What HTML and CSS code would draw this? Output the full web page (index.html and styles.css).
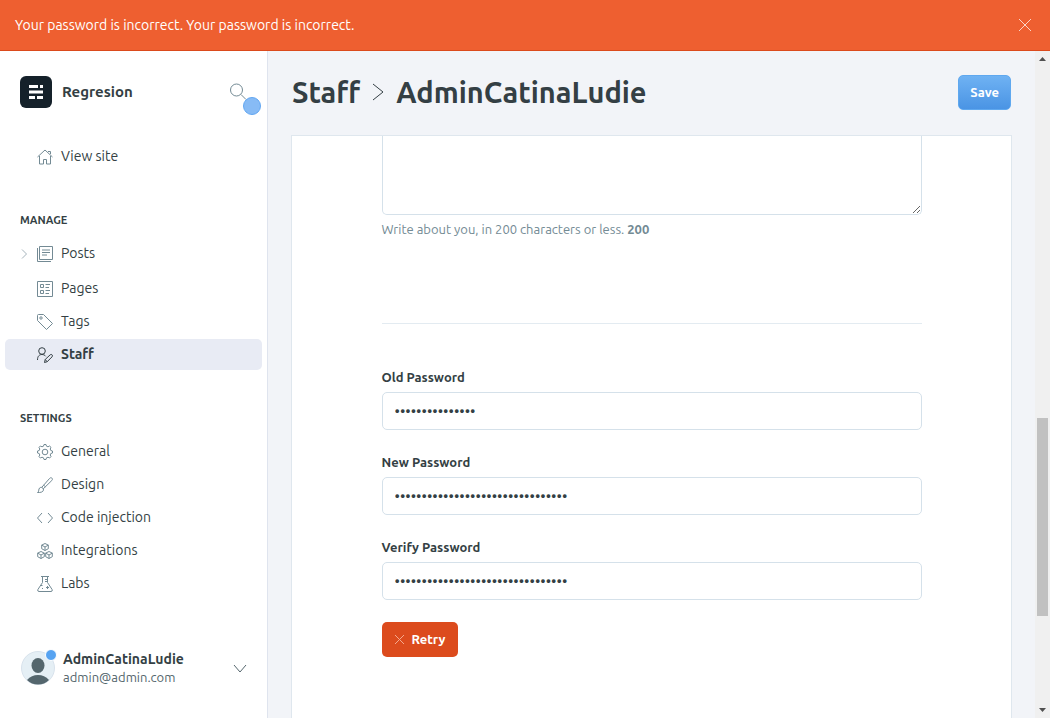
FILE: index.html
```html
<!DOCTYPE html>
<html lang="en">
<head>
<meta charset="utf-8">
<title>Staff - AdminCatinaLudie</title>
<link rel="stylesheet" href="styles.css">
</head>
<body>
<div class="alert" role="alert">
  <span>Your password is incorrect. Your password is incorrect.</span>
  <button class="icon-button" type="button" aria-label="Close"><svg width="14" height="14" viewBox="0 0 14 14"><path d="M1 1l12 12M13 1L1 13"/></svg></button>
</div>
<div class="app">
  <aside class="sidebar">
    <div class="brand">
      <svg class="logo" width="32" height="32" viewBox="0 0 32 32"><rect width="32" height="32" rx="6" fill="#15212a"/><path d="M9 9h9v3H9zM20 9h3v3h-3zM9 14.500h14v3H9zM9 20h6v3H9zM17 20h6v3h-6z" fill="#fff"/></svg>
      <strong class="brand-name">Regresion</strong>
      <button class="icon-button search" type="button" aria-label="Search"><svg width="18" height="18" viewBox="0 0 18 18"><circle cx="7.500" cy="7" r="6"/><path d="M12 11.500l5 5"/></svg><span class="beacon"></span></button>
    </div>
    <nav class="nav">
      <ul class="nav-list">
        <li><a class="nav-link" href="#"><svg width="16" height="16" viewBox="0 0 16 16"><path d="M.5 8L8 1l7.500 7M2.500 7v8h4v-4.500h3V15h4V7M11 2.500h2.500V5"/></svg>View site</a></li>
      </ul>
      <h2 class="nav-title">Manage</h2>
      <ul class="nav-list">
        <li class="nav-parent"><a class="nav-link" href="#"><svg class="expand" width="7" height="10" viewBox="0 0 7 10"><path d="M1 .5L5.500 5 1 9.500"/></svg><svg width="16" height="16" viewBox="0 0 16 16"><path d="M2.500.5h13v13h-13zM.5 2v13.500H14M5 4h8M5 6.500h8M5 9h5"/></svg>Posts</a></li>
        <li><a class="nav-link" href="#"><svg width="16" height="16" viewBox="0 0 16 16"><path d="M.5.5h15v15H.5zM3.500 3.500h3v3h-3zM3.500 9.500h3v3h-3zM8.500 3.500h4.500M8.500 6.500H12M8.500 9.500H13M8.500 12.500H12"/></svg>Pages</a></li>
        <li><a class="nav-link" href="#"><svg width="16" height="16" viewBox="0 0 16 16"><path d="M.5 1.500v5l9 9 6-6-9-9h-5q-1 0-1 1z"/><circle cx="4" cy="4" r="1.200"/></svg>Tags</a></li>
        <li><a class="nav-link active" href="#" aria-current="page"><svg width="16" height="16" viewBox="0 0 16 16"><circle cx="5" cy="4" r="3.300"/><path d="M.5 13c0-4 2-5.500 4.500-5.500 1.600 0 3 .7 3.700 1.800M7.500 15.500l.7-3 5-4.700q1-.8 1.900.1t0 1.900l-4.900 4.900zM8.200 12.500l2 2.200"/></svg>Staff</a></li>
      </ul>
      <h2 class="nav-title">Settings</h2>
      <ul class="nav-list">
        <li><a class="nav-link" href="#"><svg width="16" height="16" viewBox="0 0 16 16"><path d="M6.500 2.200L7 .5h2l.5 1.700 1.500.6L12.600 2 14 3.400 13.200 5l.6 1.500 1.700.5v2l-1.700.5-.6 1.500.8 1.600-1.400 1.400-1.600-.8-1.500.6L9 15.500H7l-.5-1.700-1.500-.6-1.600.8L2 12.600 2.800 11l-.6-1.500L.5 9V7l1.700-.5L2.800 5 2 3.400 3.400 2l1.600.8z"/><circle cx="8" cy="8" r="2.800"/></svg>General</a></li>
        <li><a class="nav-link" href="#"><svg width="16" height="16" viewBox="0 0 16 16"><path d="M.5 15.500c1.500-.8 1-2 1.500-3.500.6-1.800 2.600-2.200 3.800-1s.8 3.200-1 4c-1.300.6-2.800.5-4.300.5zM4.800 10.300l7.700-8.800c.8-.9 1.700-1 2.400-.4s.7 1.600-.1 2.400L6.300 11.800M6.700 8.200l1.700 1.600"/></svg>Design</a></li>
        <li><a class="nav-link" href="#"><svg width="16" height="16" viewBox="0 0 16 16"><path d="M5 3L.5 8 5 13M11 3l4.500 5-4.500 5"/></svg>Code injection</a></li>
        <li><a class="nav-link" href="#"><svg width="16" height="16" viewBox="0 0 16 16"><path d="M8 .5l3.300 1.600v3.600L8 7.500 4.700 5.700V2.100zM4.700 2.100L8 4l3.300-1.900M8 4v3.500M4 8.500l3.300 1.600v3.600L4 15.500.7 13.700v-3.600zM.7 10.100L4 12l3.300-1.900M4 12v3.500M12 8.500l3.300 1.600v3.600L12 15.500l-3.300-1.800v-3.600zM8.700 10.100L12 12l3.300-1.900M12 12v3.500"/></svg>Integrations</a></li>
        <li><a class="nav-link" href="#"><svg width="16" height="16" viewBox="0 0 16 16"><path d="M4 .5h8M5.500.5v6L.9 13.500q-.7 2 1.100 2h12q1.800 0 1.100-2L10.500 6.500v-6M8 3.500h2.500M8 5.500h2.500M3.500 9.500h2M9 11.500h3M10.500 10v3M5 12.500h1"/></svg>Labs</a></li>
      </ul>
    </nav>
    <button class="account" type="button">
      <span class="avatar"><svg width="34" height="34" viewBox="0 0 34 34"><circle cx="17" cy="17" r="16.500" fill="#e5eff5" stroke="#d8e2ec"/><ellipse cx="17" cy="14.500" rx="6.500" ry="7.500" fill="#54666d" stroke="none"/><path d="M6 29q4.500-5 11-5t11 5q-4.500 4.500-11 4.500T6 29z" fill="#54666d" stroke="none"/></svg><span class="avatar-dot"></span></span>
      <span class="account-text"><strong class="account-name">AdminCatinaLudie</strong><span class="account-mail">admin@admin.com</span></span>
      <svg width="14" height="9" viewBox="0 0 14 9"><path d="M1 1l6 7 6-7"/></svg>
    </button>
  </aside>
  <main class="main">
    <header class="page-head">
      <h1 class="title"><a href="#">Staff</a><svg width="12" height="18" viewBox="0 0 12 18"><path d="M1 1l10 8-10 8"/></svg><span>AdminCatinaLudie</span></h1>
      <button class="button save" type="submit" form="account-form">Save</button>
    </header>
    <section class="card">
      <form class="form" id="account-form">
        <textarea class="bio" id="bio" aria-label="Bio" aria-describedby="bio-hint"></textarea>
        <p class="hint" id="bio-hint">Write about you, in 200 characters or less. <b>200</b></p>
        <hr class="rule">
        <div class="field"><label for="old">Old Password</label><input id="old" type="password" value="incorrectpasswd"></div>
        <div class="field"><label for="new">New Password</label><input id="new" type="password" value="abcdefghijklmnopqrstuvwxyz012345"></div>
        <div class="field"><label for="verify">Verify Password</label><input id="verify" type="password" value="abcdefghijklmnopqrstuvwxyz012345"></div>
        <button class="button retry" type="button"><svg width="11" height="11" viewBox="0 0 11 11"><path d="M1 1l9 9M10 1l-9 9"/></svg>Retry</button>
      </form>
    </section>
  </main>
  <div class="scrollbar" aria-hidden="true">
    <svg width="7" height="4" viewBox="0 0 7 4"><path d="M0 4l3.500-4L7 4z"/></svg>
    <div class="track"><div class="thumb"></div></div>
    <svg width="7" height="4" viewBox="0 0 7 4"><path d="M0 0l3.500 4L7 0z"/></svg>
  </div>
</div>
</body>
</html>
```
FILE: styles.css
```css
* {
  box-sizing: border-box;
}

body {
  display: flex;
  flex-direction: column;
  height: 100vh;
  margin: 0;
  overflow: hidden;
  background: #f2f4f8;
  color: #343f44;
  font-family: Ubuntu, "Open Sans", "Noto Sans", sans-serif;
  font-size: 14px;
  line-height: 20px;
}

a {
  color: inherit;
  text-decoration: none;
}

button,
input,
textarea {
  font: inherit;
  color: inherit;
}

svg {
  flex: none;
  fill: none;
  stroke: #738a94;
}

.icon-button {
  display: flex;
  padding: 0;
  border: 0;
  background: none;
}

.alert {
  display: flex;
  flex: none;
  align-items: center;
  justify-content: space-between;
  padding: 15px 18px 15px 15px;
  border-bottom: 1px solid #db4a1c;
  background: #ee5f30;
  color: #fff;
}

.alert svg {
  stroke: #fbd5c8;
}

.app {
  display: flex;
  flex: 1;
  min-height: 0;
}

.sidebar {
  display: flex;
  flex: none;
  flex-direction: column;
  width: 268px;
  border-right: 1px solid #dfe4ee;
  background: #fff;
}

.brand {
  display: flex;
  align-items: center;
  gap: 10px;
  padding: 25px 20px 33px;
}

.brand .logo {
  stroke: none;
}

.brand-name {
  flex: 1;
  font-size: 15px;
}

.search {
  position: relative;
}

.beacon {
  position: absolute;
  top: 14px;
  left: 14px;
  width: 18px;
  height: 18px;
  border: 1px solid #62a7f2;
  border-radius: 50%;
  background: #87bbf5;
}

.nav {
  flex: 1;
}

.nav-list {
  display: flex;
  flex-direction: column;
  gap: 2px;
  margin: 0;
  padding: 0 5px;
  list-style: none;
}

.nav-title {
  margin: 38px 20px 8px;
  font-size: 11px;
  font-weight: 600;
  line-height: 20px;
  text-transform: uppercase;
}

.nav-parent {
  margin-bottom: 2px;
}

.nav-link {
  position: relative;
  display: flex;
  align-items: center;
  gap: 8px;
  height: 31px;
  padding: 0 0 2px 32px;
  border-radius: 5px;
}

.nav-link svg {
  margin-top: 2px;
}

.nav-link.active {
  background: #e8ebf4;
  font-weight: 700;
}

.active svg {
  stroke: #343f44;
}

.expand {
  position: absolute;
  left: 16px;
  stroke: #a5b3bb;
}

.account {
  display: flex;
  align-items: center;
  gap: 8px;
  padding: 0 20px 32px 21px;
  border: 0;
  background: none;
  text-align: left;
}

.avatar {
  position: relative;
  display: flex;
}

.avatar-dot {
  position: absolute;
  top: -2px;
  right: -2px;
  width: 12px;
  height: 12px;
  border: 1px solid #fff;
  border-radius: 50%;
  background: #57a3f1;
}

.account-text {
  display: flex;
  flex: 1;
  flex-direction: column;
  line-height: 18px;
}

.account-mail {
  color: #54666d;
  font-size: 13px;
}

.account > svg {
  stroke: #54666d;
}

.main {
  display: flex;
  flex: 1;
  flex-direction: column;
  min-width: 0;
  padding: 0 23px;
}

.page-head {
  display: flex;
  flex: none;
  align-items: center;
  justify-content: space-between;
  height: 84px;
  padding: 0 1px 2px;
}

.title {
  display: flex;
  align-items: center;
  gap: 12px;
  margin: 0;
  font-size: 29px;
  line-height: 34px;
}

.title svg {
  stroke: #343f44;
}

.button {
  display: flex;
  align-items: center;
  gap: 7px;
  height: 35px;
  padding: 0 12px 1px;
  border: 0;
  border-radius: 5px;
  color: #fff;
  font-size: 13px;
  font-weight: 600;
}

.save {
  padding: 0 11px;
  border: 1px solid #5fa8ef;
  background: linear-gradient(#6fb2f3, #4a94e4);
}

.card {
  display: flex;
  flex: 1;
  justify-content: center;
  min-height: 0;
  overflow: hidden;
  border: 1px solid #dfe7ee;
  border-bottom: 0;
  background: #fff;
}

.form {
  width: 100%;
  max-width: 540px;
}

.bio {
  display: block;
  width: 100%;
  height: 79px;
  border: 1px solid #d5e1ea;
  border-top: 0;
  border-radius: 0 0 5px 5px;
  background: #fff;
  resize: vertical;
}

.hint {
  margin: 4px 0 0;
  color: #738a94;
  font-size: 13px;
}

.rule {
  margin: 84px 0 43px;
  border: 0;
  border-top: 1px solid #e3ebf1;
}

.field {
  display: flex;
  flex-direction: column;
  gap: 5px;
  margin-bottom: 22px;
}

.field label {
  font-size: 13px;
  font-weight: 700;
}

.field input {
  height: 38px;
  padding: 0 12px 2px;
  border: 1px solid #d5e1ea;
  border-radius: 5px;
  background: #fff;
  font-size: 15px;
}

.retry {
  background: #dc4b1d;
}

.retry svg {
  stroke: #f3a98f;
}

.scrollbar {
  display: flex;
  flex: none;
  flex-direction: column;
  align-items: center;
  width: 15px;
  padding: 6px 0;
  background: #f0f0f0;
}

.scrollbar svg {
  fill: #505050;
  stroke: none;
}

.track {
  display: flex;
  flex: 1;
  flex-direction: column;
  justify-content: flex-end;
  padding-bottom: 92px;
}

.thumb {
  width: 11px;
  height: 198px;
  background: #c1c1c1;
}
```
